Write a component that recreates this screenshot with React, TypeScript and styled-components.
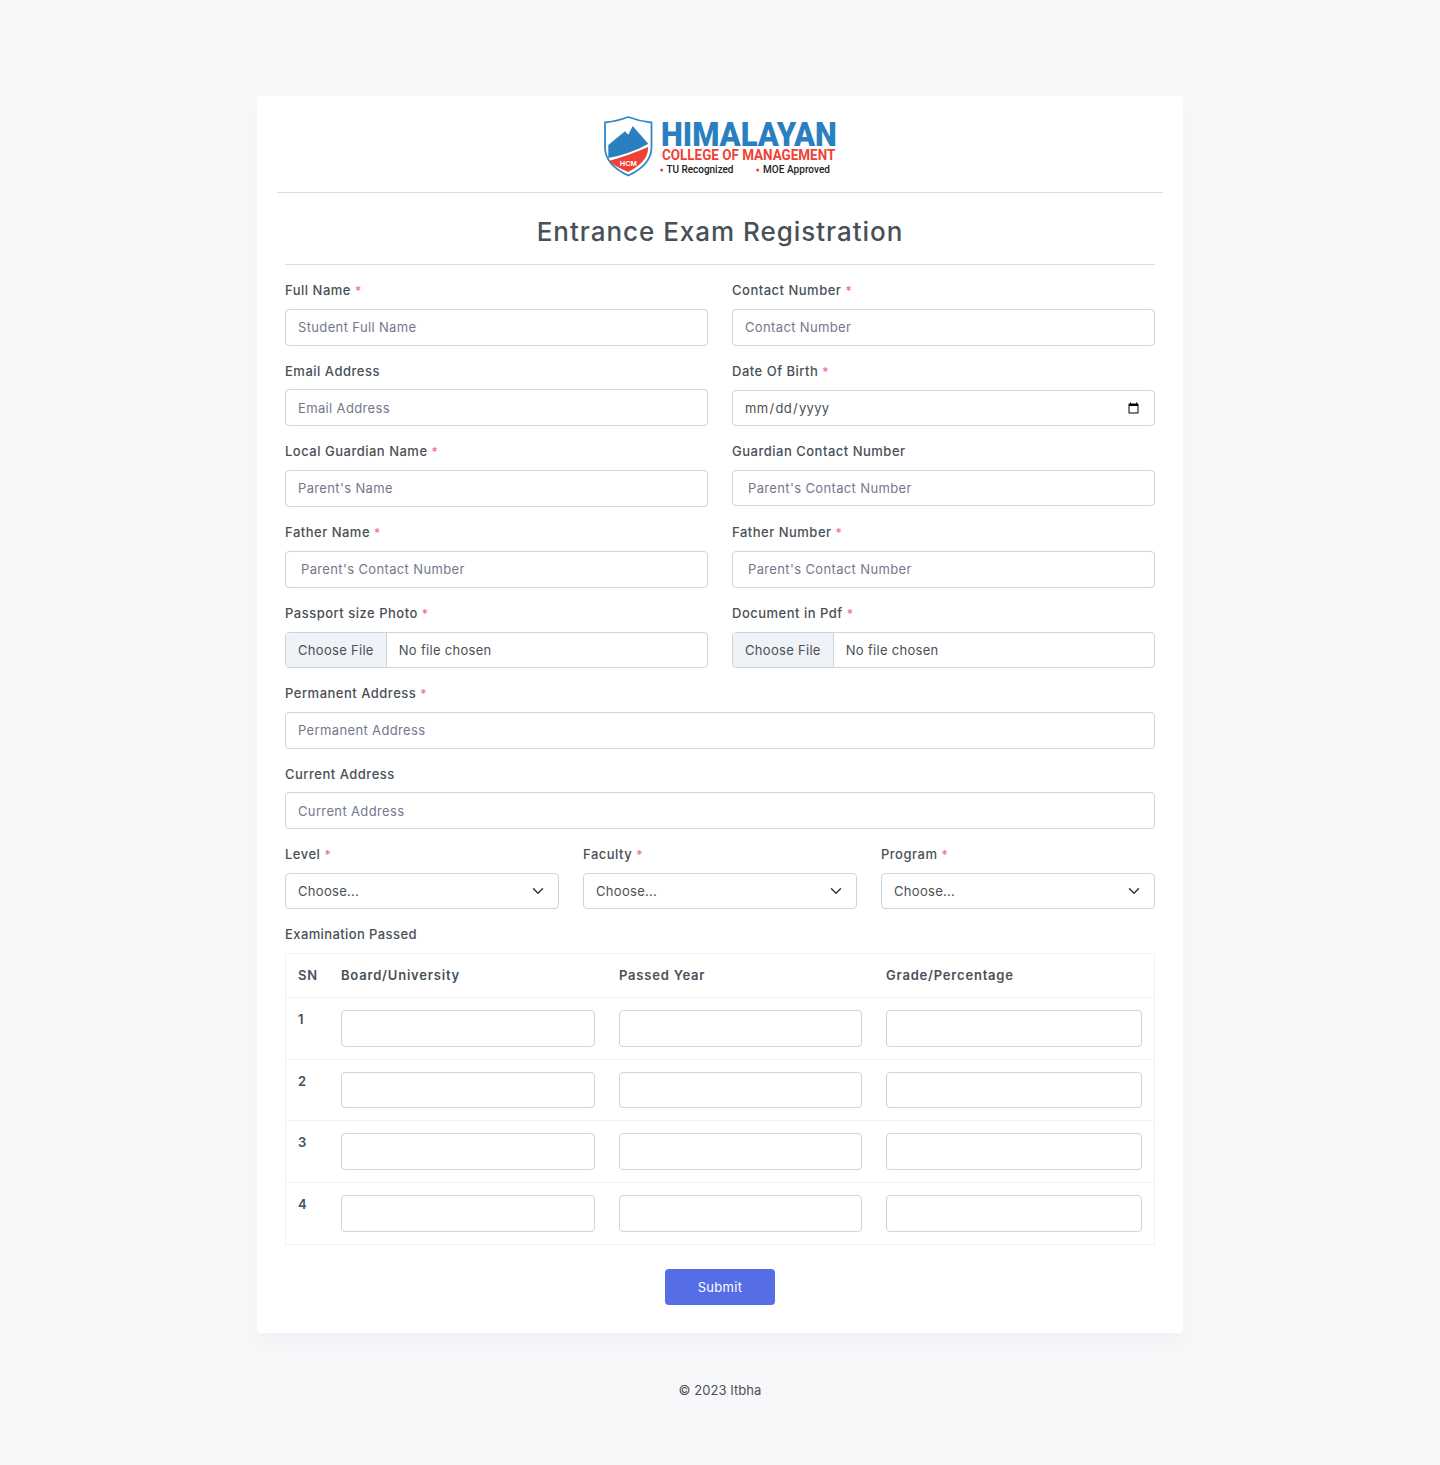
import React from "react";
import styled, { createGlobalStyle } from "styled-components";

const Global = createGlobalStyle`
  html, body { margin: 0; padding: 0; background: #f8f8fb; }
  body { font-family: Inter, "Open Sans", sans-serif; font-size: 13px; color: #495057; line-height: 1.5; }
  * { box-sizing: border-box; }
`;

const Page = styled.div`
  min-height: 1465px;
  display: flex;
  flex-direction: column;
  align-items: center;
  padding-top: 96px;
`;

const Card = styled.main`
  width: 926px;
  height: 1237px;
  background: #fff;
  border-radius: 4px;
  box-shadow: 0 12px 24px rgba(18, 38, 63, 0.03);
  padding: 19px 20px 0;
`;

const LogoBar = styled.header`
  height: 78px;
  padding-left: 2px;
  display: flex;
  justify-content: center;
  border-bottom: 1px solid #dcdcdc;
`;

const Body = styled.div`
  padding: 0 8px;
`;

const Title = styled.h1`
  margin: 0 0 16.3px;
  padding-top: 16px;
  height: 72px;
  text-align: center;
  font-size: 26px;
  line-height: 46px;
  font-weight: 500;
  letter-spacing: 0.97px;
  color: #495057;
  border-bottom: 1px solid #dcdcdc;
`;

const TwoCols = styled.div`
  display: grid;
  grid-template-columns: 423px 423px;
  column-gap: 24px;
`;

const ThreeCols = styled.div`
  display: grid;
  grid-template-columns: repeat(3, 274px);
  column-gap: 24px;
`;

const Group = styled.div`
  height: 80.6px;
`;

const Label = styled.label`
  display: block;
  height: 19.5px;
  line-height: 19.5px;
  margin-bottom: 8px;
  font-weight: 500;
  letter-spacing: 0.5px;
  color: #495057;
`;

const Star = styled.span`
  color: #f46a9b;
  font-size: 12px;
  margin-left: 4px;
`;

const Input = styled.input<{ $indent?: number; $short?: boolean }>`
  display: block;
  width: 100%;
  height: ${(p) => (p.$short ? 36 : 37)}px;
  padding: 0 12px 0 ${(p) => p.$indent ?? 12}px;
  border: 1px solid #ced4da;
  border-radius: 4px;
  background: #fff;
  font: 400 13px Inter, sans-serif;
  letter-spacing: 0.36px;
  color: #495057;
  outline: none;
  &::placeholder { color: #74788d; opacity: 1; }
`;

const DateInput = styled(Input)`
  height: 36px;
  margin-top: 9px;
  padding-left: 11px;
  letter-spacing: 0.3px;
`;

const FileInput = styled(Input)`
  height: 36px;
  margin-top: 9px;
  line-height: 34px;
  letter-spacing: 0.3px;
  &::file-selector-button {
    height: 34px;
    margin: 0 12px 0 -12px;
    padding: 0 12px;
    border: 0;
    border-right: 1px solid #ced4da;
    background: #eff2f7;
    color: #495057;
    font: 400 13px Inter, sans-serif;
    letter-spacing: 0.3px;
  }
`;

const Select = styled.select`
  display: block;
  width: 100%;
  height: 36px;
  padding: 0 36px 0 12px;
  border: 1px solid #ced4da;
  border-radius: 4px;
  font: 400 13px Inter, sans-serif;
  letter-spacing: 0.3px;
  color: #495057;
  appearance: none;
  background: #fff url("data:image/svg+xml,%3csvg xmlns='http://www.w3.org/2000/svg' viewBox='0 0 16 16'%3e%3cpath fill='none' stroke='%23343a40' stroke-linecap='round' stroke-linejoin='round' stroke-width='2' d='M2 5l6 6 6-6'/%3e%3c/svg%3e") no-repeat right 12px center / 16px 12px;
`;

const SectionLabel = styled(Label)`
  margin-top: -0.6px;
  margin-bottom: 8px;
  letter-spacing: 0.4px;
`;

const Table = styled.table`
  width: 870px;
  table-layout: fixed;
  border-collapse: separate;
  border-spacing: 0;
  border: 1px solid #eff2f7;
  border-bottom: 0;
`;

const HeadCell = styled.th<{ $w: number }>`
  width: ${(p) => p.$w}px;
  height: 44px;
  padding: 0 12px;
  text-align: left;
  font-weight: 600;
  letter-spacing: 0.8px;
  color: #495057;
  border-bottom: 1px solid #eff2f7;
`;

const NumCell = styled.th`
  padding: 12px;
  vertical-align: top;
  text-align: left;
  font-weight: 600;
  border-bottom: 1px solid #eff2f7;
`;

const Cell = styled.td`
  padding: 12px;
  vertical-align: top;
  border-bottom: 1px solid #eff2f7;
`;

const Actions = styled.div`
  display: flex;
  justify-content: center;
  margin-top: 24px;
`;

const Submit = styled.button`
  width: 110px;
  height: 36px;
  border: 0;
  border-radius: 4px;
  background: #556ee6;
  color: #fff;
  font: 400 13px Inter, sans-serif;
  letter-spacing: 0.3px;
`;

const Footer = styled.footer`
  margin-top: 48px;
  text-align: center;
  line-height: 19.5px;
  letter-spacing: 0.05px;
`;

const Logo = () => (
  <svg width="234" height="64" viewBox="0 0 234 64" role="img" aria-label="Himalayan College of Management logo">
    <path d="M24.300 2Q12 6.500 1 7.500V33Q1.500 50 24.300 60.500 47 50 47.500 33V7.500Q36 6.500 24.300 2Z" fill="#fff" stroke="#3187c9" strokeWidth="1.800" />
    <path d="M4.300 30 21 16.300l3.300 3.400L28.700 11 44 28.500V29Q26 39 4.300 43Z" fill="#2a7fc1" />
    <path d="M4.800 46Q26 40 44 32V35Q43 47 24.300 57 9 50.500 4.800 46Z" fill="#ef4136" />
    <text x="24.300" y="50.500" textAnchor="middle" fontFamily="Liberation Sans" fontWeight="700" fontSize="7.500" fill="#fff">HCM</text>
    <text transform="translate(57 31) scale(.94 1)" fontFamily="Roboto" fontWeight="900" fontSize="33" fill="#2a7fc1">HIMALAYAN</text>
    <text transform="translate(58 45) scale(.96 1)" fontFamily="Roboto" fontWeight="700" fontSize="14" fill="#ef4136">COLLEGE OF MANAGEMENT</text>
    <circle cx="57.700" cy="55" r="1.500" fill="#ef4136" />
    <text x="62.500" y="58" fontFamily="Roboto" fontWeight="500" fontSize="10" fill="#222" textLength="67">TU Recognized</text>
    <circle cx="153.700" cy="55" r="1.500" fill="#ef4136" />
    <text x="159" y="58" fontFamily="Roboto" fontWeight="500" fontSize="10" fill="#222" textLength="67">MOE Approved</text>
  </svg>
);

const Field = ({ label, required, children }: { label: string; required?: boolean; children: React.ReactNode }) => (
  <Group>
    <Label>
      {label}
      {required && <Star>*</Star>}
    </Label>
    {children}
  </Group>
);

export default function App() {
  return (
    <Page>
      <Global />
      <Card>
        <LogoBar>
          <Logo />
        </LogoBar>
        <Body>
          <Title>Entrance Exam Registration</Title>
          <TwoCols>
            <Field label="Full Name" required><Input placeholder="Student Full Name" /></Field>
            <Field label="Contact Number" required><Input placeholder="Contact Number" /></Field>
            <Field label="Email Address"><Input placeholder="Email Address" /></Field>
            <Field label="Date Of Birth" required><DateInput type="date" /></Field>
            <Field label="Local Guardian Name" required><Input placeholder="Parent's Name" /></Field>
            <Field label="Guardian Contact Number"><Input $indent={15} $short placeholder="Parent's Contact Number" /></Field>
            <Field label="Father Name" required><Input $indent={15} placeholder="Parent's Contact Number" /></Field>
            <Field label="Father Number" required><Input $indent={15} placeholder="Parent's Contact Number" /></Field>
            <Field label="Passport size Photo" required><FileInput type="file" /></Field>
            <Field label="Document in Pdf" required><FileInput type="file" /></Field>
          </TwoCols>
          <Field label="Permanent Address" required><Input placeholder="Permanent Address" /></Field>
          <Field label="Current Address"><Input placeholder="Current Address" /></Field>
          <ThreeCols>
            {["Level", "Faculty", "Program"].map((name) => (
              <Field key={name} label={name} required>
                <Select defaultValue="">
                  <option value="">Choose...</option>
                </Select>
              </Field>
            ))}
          </ThreeCols>
          <SectionLabel>Examination Passed</SectionLabel>
          <Table>
            <thead>
              <tr>
                <HeadCell $w={43}>SN</HeadCell>
                <HeadCell $w={278}>Board/University</HeadCell>
                <HeadCell $w={267}>Passed Year</HeadCell>
                <HeadCell $w={280}>Grade/Percentage</HeadCell>
              </tr>
            </thead>
            <tbody>
              {[1, 2, 3, 4].map((n) => (
                <tr key={n}>
                  <NumCell>{n}</NumCell>
                  <Cell><Input $short={n === 2} /></Cell>
                  <Cell><Input $short={n === 2} /></Cell>
                  <Cell><Input $short={n === 2} /></Cell>
                </tr>
              ))}
            </tbody>
          </Table>
          <Actions>
            <Submit type="button">Submit</Submit>
          </Actions>
        </Body>
      </Card>
      <Footer>© 2023 Itbha</Footer>
    </Page>
  );
}
